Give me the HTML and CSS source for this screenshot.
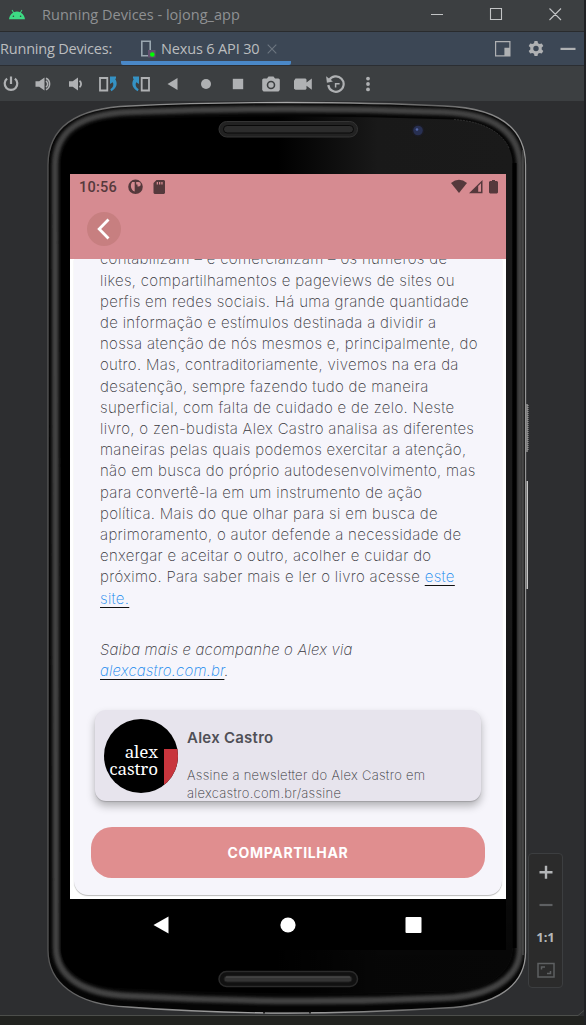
FILE: index.html
```html
<!DOCTYPE html>
<html lang="pt-BR">
<head>
<meta charset="utf-8">
<title>Running Devices - lojong_app</title>
<link rel="stylesheet" href="styles.css">
</head>
<body>
<div class="window">
  <header class="titlebar">
    <svg class="android" viewBox="0 0 16 11" width="16" height="11"><path d="M0 10.3C.4 6.8 2 4.9 4.1 3.7L2.6 1.2l.8-.5L4.9 3.200c2-.8 4.200-.8 6.200 0L12.600.7l.8.5L11.900 3.700C14 4.900 15.600 6.800 16 10.300z" fill="#3ddc84"/><circle cx="4.400" cy="7.200" r=".8" fill="#3c3f41"/><circle cx="11.600" cy="7.200" r=".8" fill="#3c3f41"/></svg>
    <span class="title">Running Devices - lojong_app</span>
    <svg class="controls" viewBox="0 0 134 16" width="134" height="16" fill="none" stroke="#c2c4c5" stroke-width="1.100"><path d="M1 8.500h12M60.500 2.500h11v11h-11zM119.500 2.500l11.500 11.500M131 2.500L119.500 14"/></svg>
  </header>
  <div class="tabbar">
    <span class="label">Running Devices:</span>
    <div class="tab">
      <svg viewBox="0 0 16 18" width="16" height="18"><path d="M1.800 1.200h8.400v14.600H1.800z" fill="none" stroke="#9aa7b0" stroke-width="1.600"/><path d="M8 10h7.500v7.500H8z" fill="#65506f"/><circle cx="12.300" cy="14.500" r="2.300" fill="#0f0"/></svg>
      <span class="tabname">Nexus 6 API 30</span>
      <svg viewBox="0 0 10 10" width="10" height="10"><path d="M.7.700l8.600 8.600M9.300.700L.7 9.300" stroke="#6d7680" stroke-width="1.100"/></svg>
    </div>
    <svg class="tools" viewBox="0 0 82 18" width="82" height="18" fill="#afb1b3"><path d="M1 1h15.500v15.500H1zM2.200 2.200v13.100h8.200V7.700h4.900V2.200z" fill-rule="evenodd"/><path transform="translate(1)" fill-rule="evenodd" d="M39.500 1h3l.5 2.200 1.600.9 2.200-.7 1.500 2.600-1.600 1.600v1.800l1.600 1.600-1.500 2.600-2.200-.7-1.600.9-.5 2.200h-3l-.5-2.200-1.600-.9-2.200.7-1.500-2.600 1.600-1.600V7.600L33.700 6l1.500-2.600 2.200.7 1.600-.9zM41 5.800a2.700 2.700 0 1 0 0 5.400 2.700 2.700 0 0 0 0-5.400z"/><path d="M66.500 7.800h15v2.200h-15z"/></svg>
  </div>
  <nav class="toolbar">
    <svg viewBox="0 0 20 20"><path d="M10 2.500v7.500M6.100 4.700a6.300 6.300 0 1 0 7.800 0" fill="none" stroke="#afb1b3" stroke-width="2.200"/></svg>
    <svg viewBox="-1 0 20 20"><path d="M1.500 7.300h3.700L10.500 3.500v13l-5.300-3.800H1.500z"/><path d="M12 6.800a4 4 0 0 1 0 6.400M12 4.300a6.300 6.300 0 0 1 0 11.400" fill="none" stroke="#afb1b3" stroke-width="1.500"/></svg>
    <svg viewBox="0 0 20 20"><path d="M3 7.300h3.700l5.300-3.800v13l-5.300-3.800H3z"/><path d="M13.500 6.800a4 4 0 0 1 0 6.400" fill="none" stroke="#afb1b3" stroke-width="1.800"/></svg>
    <svg viewBox="0 0 20 20"><path d="M2 4h7.300v12.500H2z" fill="none" stroke="#afb1b3" stroke-width="1.800"/><path d="M12 2.500h6v2.300h-1c3 4 2 9.500-3.700 12.500l-1-2c3-1.800 3.700-4.600 2.500-7L12 10z" fill="#3592c4"/></svg>
    <svg viewBox="0 0 20 20"><path d="M10.700 4H18v12.500h-7.300z" fill="none" stroke="#afb1b3" stroke-width="1.800"/><path d="M8 2.500H2v2.300h1c-3 4-2 9.500 3.700 12.500l1-2c-3-1.800-3.700-4.600-2.500-7L8 10z" fill="#3592c4"/></svg>
    <svg viewBox="0 0 20 20"><path d="M4.500 10l10-6v12z"/></svg>
    <svg viewBox="0 0 20 20"><circle cx="10" cy="10" r="5"/></svg>
    <svg viewBox="0 0 20 20"><path d="M4.800 4.800h10.400v10.400H4.800z"/></svg>
    <svg viewBox="0 0 20 20"><path d="M2.500 4.500H6l1.500-2h5l1.500 2h3.500l1.300 1V16l-1.300 1.500h-15L1.200 16V5.500z"/><circle cx="10" cy="11" r="3.500" fill="none" stroke="#3c3f41" stroke-width="1.600"/></svg>
    <svg viewBox="0 0 20 20"><path d="M2.500 4.500h10l1 1v3l5.300-4v11.200l-5.300-4v3l-1 1h-10l-1.500-1v-8z"/></svg>
    <svg viewBox="-.6 0 20 20"><path d="M3.500 6.500A7.700 7.700 0 1 1 2.700 11" fill="none" stroke="#afb1b3" stroke-width="2.200"/><path d="M.5 2.200l.8 6.500 6-1.200z"/><path d="M10 13.500V9.700h4" fill="none" stroke="#afb1b3" stroke-width="1.500"/></svg>
    <svg viewBox="0 0 20 20"><circle cx="10" cy="4.600" r="1.900"/><circle cx="10" cy="10" r="1.900"/><circle cx="10" cy="15.400" r="1.900"/></svg>
  </nav>
  <main class="stage">
    <svg class="body" viewBox="0 101 586 924" width="586" height="924">
      <defs>
        <linearGradient id="face" x1="61" x2="513" y1="0" y2="0" gradientUnits="userSpaceOnUse"><stop offset="0"/><stop offset=".48"/><stop offset=".7" stop-color="#191919"/><stop offset="1" stop-color="#1a1a1a"/></linearGradient>
        <linearGradient id="fade" x1="0" x2="0" y1="600" y2="960" gradientUnits="userSpaceOnUse"><stop offset="0" stop-opacity="0"/><stop offset="1" stop-opacity=".75"/></linearGradient>
        <linearGradient id="shine" x1="47" x2="527" y1="0" y2="0" gradientUnits="userSpaceOnUse"><stop offset="0" stop-color="#555"/><stop offset=".2" stop-color="#888"/><stop offset=".5" stop-color="#aaa"/><stop offset=".8" stop-color="#666"/><stop offset="1" stop-color="#999"/></linearGradient>
        <filter id="soft" x="-5%" y="-5%" width="110%" height="110%"><feGaussianBlur stdDeviation="1.800"/></filter>
        <path id="outline" d="M48 165C48 128 75 108 130 106C180 103.500 235 102.500 287 102.500C340 102.500 395 103.500 444 106C499 108 525.500 128 525.500 165V952C525.500 985 497 1006 444 1008C395 1011 340 1013 287 1013C235 1013 180 1011 128 1007C75 1005 48 982 48 950Z"/>
        <clipPath id="shape"><use href="#outline"/></clipPath>
      </defs>
      <g fill="#777"><path d="M526 404h2v48h-2zM526 481h2v108h-2z"/><path d="M528 405v46" stroke="#aaa" stroke-dasharray="1 1"/><path d="M527.500 481v108" stroke="#c5c5c5"/></g>
      <use href="#outline" fill="#050505" stroke="url(#shine)" stroke-width="1.300"/>
      <g clip-path="url(#shape)"><path d="M55 166C55 132 78 114 130 112Q287 106 444 112C496 114 519 133 520 165V950C519 978 492 996 444 998Q287 1005 130 996C80 994 56 975 56 947Z" fill="none" stroke="#424242" stroke-width="6.500" filter="url(#soft)"/><path d="M523 150v805" stroke="#606060" stroke-width="1"/></g>
      <path id="glass" d="M61 163C62 137 84 121 120 119.500Q287 113.500 454 119.500C490 121 512 139 512.500 163V948C512 972 488 990 454 991Q287 997 120 988C82 986 61 969 61 947Z" fill="url(#face)"/>
      <path d="M61 600H512.500V948C512 972 488 990 454 991Q287 997 120 988C82 986 61 969 61 947Z" fill="url(#fade)"/>
      <path d="M454 119.500C482 121 502 132 509 148" fill="none" stroke="#555" stroke-width=".7" opacity=".6" stroke-dasharray="2 1"/>
      <path d="M514.500 163v785" stroke="#000" stroke-width="4"/>
      <g id="speakers"><rect x="219" y="121.500" width="138.500" height="15.500" rx="7.700" fill="#222" stroke="#343434"/><rect x="223.500" y="125.500" width="130" height="7.500" rx="3.700" fill="#2c2c2c" stroke="#090909"/><rect x="219" y="971.500" width="138.500" height="15" rx="7.500" fill="#111" stroke="#2b2b2b" stroke-width="1.500"/><rect x="224" y="976" width="128" height="6" rx="3" fill="#343434" stroke="#202020"/><path d="M226 977h124" stroke="#505050"/></g>
      <circle cx="418" cy="130.500" r="6.500" fill="#1b1b22"/><circle cx="418" cy="130.500" r="4.800" fill="#283052"/><circle cx="417" cy="129.500" r="1.300" fill="#5467a8"/>
      <path d="M0 1015.500h578l6-5" fill="none" stroke="#4c4e4b"/><path d="M264 1013.500v-2h46v2" fill="none" stroke="#080808" stroke-width="1.500"/><path d="M0 1016h586v9H0z" fill="#21221f"/>
    </svg>
    <section class="screen">
      <div class="appbar">
        <div class="status">
          <span class="clock">10:56</span>
          <svg class="notify" viewBox="0 0 40 16" width="40" height="16" fill="#55393c"><path fill-rule="evenodd" d="M7.500.500a7.300 7.300 0 1 0 0 14.600 7.300 7.300 0 0 0 0-14.600zM4.200 3h2.500v9.500C3 11.500 1.700 6 4.200 3zM8.200 3h2.300a2.300 2.300 0 0 1 0 4.600h-1v-2H8.200z"/><path fill-rule="evenodd" d="M28.500 1h7.500l1 1v12l-1 1H26.500l-1-1V4zM28.700 3v2.500h1.300V3zm2.300 0v2.500h1.300V3zm2.300 0v2.500h1.300V3z"/></svg>
          <svg class="signals" viewBox="0 0 48 16" width="48" height="16" fill="#55393c"><path d="M0 4Q8-2.500 16 4L8 14z"/><path fill-rule="evenodd" d="M18 14.200L31.500 1v13.200zM27.200 7v5.800h2.800V4.300z"/><path d="M38 3l1-1h2V1h3v1h2l1 1v10.500l-1 1h-7l-1-1z"/></svg>
        </div>
        <div class="back"><svg viewBox="0 0 34 34" width="34" height="34"><path d="M21.500 7.500L12.200 17l9.300 9.500" fill="none" stroke="#fff" stroke-width="2.800"/></svg></div>
      </div>
      <div class="viewport">
        <article class="page">
          <p class="text">contabilizam – e comercializam – os números de<br>likes, compartilhamentos e pageviews de sites ou<br>perfis em redes sociais. Há uma grande quantidade<br>de informação e estímulos destinada a dividir a<br>nossa atenção de nós mesmos e, principalmente, do<br>outro. Mas, contraditoriamente, vivemos na era da<br>desatenção, sempre fazendo tudo de maneira<br>superficial, com falta de cuidado e de zelo. Neste<br>livro, o zen-budista Alex Castro analisa as diferentes<br>maneiras pelas quais podemos exercitar a atenção,<br>não em busca do próprio autodesenvolvimento, mas<br>para convertê-la em um instrumento de ação<br>política. Mais do que olhar para si em busca de<br>aprimoramento, o autor defende a necessidade de<br>enxergar e aceitar o outro, acolher e cuidar do<br>próximo. Para saber mais e ler o livro acesse <a>este</a><br><a>site.</a></p>
          <p class="text more">Saiba mais e acompanhe o Alex via<br><a>alexcastro.com.br</a>.</p>
          <div class="card">
            <div class="avatar"><span>alex<br>castro</span><i></i></div>
            <div class="info"><h2>Alex Castro</h2><p>Assine a newsletter do Alex Castro em<br>alexcastro.com.br/assine</p></div>
          </div>
          <div class="share">COMPARTILHAR</div>
        </article>
      </div>
      <div class="navbar"><svg viewBox="0 0 270 18" width="270" height="18" fill="#fff"><path d="M.5 9L15.500.500v17z"/><circle cx="135" cy="9" r="7.600"/><rect x="252.500" y="1" width="16" height="16" rx="1"/></svg></div>
    </section>
    <aside class="zoom">
      <svg viewBox="0 0 20 20" width="20" height="20"><path d="M10 3.700v13M3.500 10.200h13" stroke="#b3b5b7" stroke-width="2.400"/></svg>
      <svg viewBox="0 0 20 20" width="20" height="20"><path d="M3.500 10h13" stroke="#5e6062" stroke-width="2.200"/></svg>
      <b>1:1</b>
      <svg viewBox="0 0 20 20" width="20" height="20" fill="none" stroke="#5e6062" stroke-width="1.500"><path d="M2 2.500h16V16H2z"/><path d="M5.500 8.500V6H9M14.500 10v2.500H11"/></svg>
    </aside>
  </main>
</div>
</body>
</html>
```
FILE: styles.css
```css
* { box-sizing: border-box; }
body { margin: 0; background: #222; font-family: "Open Sans", sans-serif; }
svg { display: block; flex: none; }
.window { width: 586px; height: 1025px; overflow: hidden; background: #2d2e30; border-right: 2px solid #202124; display: flex; flex-direction: column; white-space: nowrap; }
.titlebar { height: 32px; flex: none; background: #3c3f41; border-bottom: 1px solid #292b2d; display: flex; align-items: center; padding: 0 20px 3px 9px; color: #8f9193; font-size: 14.5px; }
.title { margin-left: 17px; letter-spacing: .02px; }
.controls { margin-left: auto; }
.tabbar { height: 34px; flex: none; background: #3c4755; border-bottom: 1px solid #2b2e32; display: flex; align-items: center; color: #bbbdbf; font-size: 14.5px; padding-right: 8px; }
.label { letter-spacing: -.2px; width: 121px; }
.tab { width: 170px; height: 33px; border-bottom: 4px solid #4a88c7; border-radius: 0 0 2px 2px; display: flex; align-items: center; padding: 4px 13px 0 19px; }
.tabname { margin-left: 5px; letter-spacing: -.15px; width: 106px; flex: none; }
.tools { margin-left: auto; }
.toolbar { height: 35px; flex: none; background: #3c3f41; display: flex; align-items: center; padding-left: 1px; gap: 12.450px; fill: #afb1b3; }
.toolbar svg { width: 20px; height: 20px; }
.stage { position: relative; width: 586px; height: 924px; flex: none; }
.body { position: absolute; left: 0; top: 0; }
.screen { position: absolute; left: 70px; top: 73px; width: 436px; height: 776px; display: flex; flex-direction: column; background: #000; }
.appbar { height: 85px; flex: none; background: #d68b91; }
.status { height: 26px; padding: 0 7px 0 9px; display: flex; align-items: center; color: #55393c; }
.clock { font: 500 14.500px Roboto, sans-serif; letter-spacing: .25px; width: 49px; padding-top: 1px; }
.signals { margin-left: auto; }
.back { width: 34px; height: 34px; margin: 12px 0 0 17px; border-radius: 50%; background: #c77f80; }
.viewport { height: 640px; overflow: hidden; background: #fff; padding: 0 4px; flex: none; }
.page { height: 636px; background: #f6f5fb; border-radius: 0 0 14px 14px; box-shadow: 0 1px 1px #bbb; overflow: hidden; color: #36363b; font-family: Inter, sans-serif; }
.text { margin: -10.700px 0 0 26px; font-size: 15px; line-height: 21.200px; font-weight: 200; letter-spacing: .32px; }
.text a { color: #1689ee; text-decoration: underline #111; text-underline-offset: 3px; text-decoration-thickness: 1px; }
.more { margin-top: 30px; font-style: italic; letter-spacing: .17px; }
.card { margin: 29.100px 0 0 21px; width: 386px; height: 91px; background: #e7e4ed; border-radius: 11px; box-shadow: 0 5px 8px rgba(0,0,0,.28), 0 1px 1px rgba(0,0,0,.15); display: flex; padding: 9px 9px 0; gap: 9px; overflow: hidden; }
.avatar { width: 74px; height: 74px; flex: none; border-radius: 50%; background: #000; overflow: hidden; display: flex; color: #fff; }
.avatar span { width: 60px; padding: 24px 6px 0 0; display: flex; justify-content: flex-end; font: 17px/17px "Noto Serif", "Liberation Serif", serif; text-align: right; letter-spacing: -.1px; }
.avatar i { margin-top: 30px; width: 14px; background: #c8353d; }
.info h2 { margin: 10px 0 0; font-size: 15px; line-height: 18px; font-weight: 600; letter-spacing: .25px; color: #505057; }
.info p { margin: 19px 0 0; font-size: 13px; line-height: 18px; font-weight: 200; letter-spacing: .3px; }
.share { margin: 26px 0 0 17px; width: 394px; height: 51px; border-radius: 21px; background: #e08e8f; color: #fff; font-size: 14px; font-weight: 700; letter-spacing: .65px; display: flex; align-items: center; justify-content: center; }
.navbar { flex: 1; display: flex; justify-content: center; align-items: center; padding: 1px 1px 0 0; }
.zoom { position: absolute; left: 528px; top: 752px; width: 35px; height: 135px; background: #2b2b2b; border: 1px solid #3c3e40; border-radius: 4px; display: flex; flex-direction: column; align-items: center; padding-top: 8px; gap: 13px; color: #b5b7b9; }
.zoom b { font: 700 13px/18px "Noto Sans", sans-serif; height: 20px; }
```
